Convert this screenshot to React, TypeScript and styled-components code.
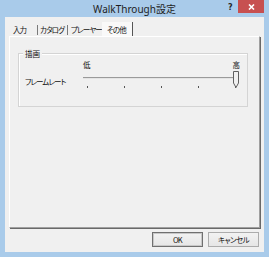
import React from "react";
import styled, { createGlobalStyle } from "styled-components";

const Global = createGlobalStyle`
  html, body { margin: 0; padding: 0; background: #a9cbea; }
  body { width: 269px; height: 257px; overflow: hidden; }
  * { box-sizing: border-box; }
`;

const jp = `"Noto Sans CJK JP", "Noto Sans", sans-serif`;

const Frame = styled.div`
  width: 269px;
  height: 257px;
  background: #a9cbea;
  display: flex;
  flex-direction: column;
  position: relative;
`;

const TitleBar = styled.div`
  height: 17px;
  display: flex;
  align-items: center;
  justify-content: center;
  position: relative;
`;

const Title = styled.div`
  font-family: "Noto Sans", "Noto Sans CJK JP", sans-serif;
  font-size: 10px;
  color: #1e1e1e;
  line-height: 1;
  margin-top: 1px;
`;

const HelpGlyph = styled.div`
  position: absolute;
  left: 228px;
  top: 3px;
  font-family: "DejaVu Sans", sans-serif;
  font-weight: bold;
  font-size: 8px;
  color: #2a2a2a;
`;

const CloseBtn = styled.div`
  position: absolute;
  left: 238px;
  top: 0;
  width: 26px;
  height: 13px;
  background: #c75050;
  display: flex;
  align-items: center;
  justify-content: center;
`;

const Client = styled.div`
  flex: 1;
  margin: 0 5px 5px 5px;
  background: #f0f0f0;
  display: flex;
  flex-direction: column;
  padding: 5px 4px 0 4px;
`;

const TabStrip = styled.div`
  height: 14px;
  display: flex;
  align-items: stretch;
`;

const Tab = styled.div<{ $w: number; $pad: number; $active?: boolean; $sep?: boolean }>`
  width: ${(p) => p.$w}px;
  font-family: ${jp};
  font-size: 7.5px;
  letter-spacing: -0.9px;
  font-feature-settings: "palt";
  white-space: nowrap;
  color: #111;
  display: flex;
  align-items: center;
  padding-top: 1px;
  padding-left: ${(p) => p.$pad}px;
  background: ${(p) => (p.$active ? "#f9f9f9" : "transparent")};
  position: relative;
  &::after {
    content: "";
    position: absolute;
    right: 0;
    top: ${(p) => (p.$active ? 0 : 3)}px;
    bottom: ${(p) => (p.$active ? 0 : 1)}px;
    width: 1px;
    background: ${(p) => (p.$active ? "#555" : p.$sep ? "#7a7a7a" : "transparent")};
  }
`;

const Panel = styled.div`
  height: 192px;
  border-top: 1px solid #fff;
  border-left: 1px solid #fff;
  border-right: 1px solid #a0a0a0;
  border-bottom: 1px solid #a0a0a0;
  box-shadow: 1px 1px 0 #696969;
  padding: 16px 11px 0 8px;
`;

const GroupBox = styled.div`
  position: relative;
  border: 1px solid #d4d4d4;
  box-shadow: inset 1px 1px 0 #fff;
  padding: 6px 7px 16px 6px;
  display: grid;
  grid-template-columns: 58px 157px;
  grid-template-rows: 10px 20px;
`;

const GroupLabel = styled.div`
  position: absolute;
  left: 4px;
  top: -6px;
  padding: 0 2px;
  background: #f0f0f0;
  font-family: ${jp};
  font-size: 7.5px;
  line-height: 11px;
  color: #111;
`;

const Text = styled.div`
  font-family: ${jp};
  font-size: 7.5px;
  letter-spacing: -0.9px;
  font-feature-settings: "palt";
  line-height: 10px;
  color: #111;
  white-space: nowrap;
`;

const RangeLabels = styled.div`
  display: flex;
  justify-content: space-between;
  padding: 0 1px 0 0;
`;

const RowLabel = styled(Text)`
  margin-top: 7px;
`;

const Slider = styled.div`
  position: relative;
`;

const Track = styled.div`
  position: absolute;
  left: 0;
  top: 7px;
  width: 156px;
  height: 2px;
  border-top: 1px solid #9a9a9a;
  border-bottom: 1px solid #e4e4e4;
  background: #c8c8c8;
`;

const Ticks = styled.div`
  position: absolute;
  left: 4px;
  top: 16px;
  width: 149px;
  display: flex;
  justify-content: space-between;
`;

const Tick = styled.div`
  width: 1px;
  height: 2px;
  background: #555;
`;

const Thumb = styled.svg`
  position: absolute;
  left: 150px;
  top: 1px;
`;

const ButtonRow = styled.div`
  display: flex;
  justify-content: flex-end;
  gap: 5px;
  padding: 4px 1px 0 0;
`;

const Button = styled.div<{ $default?: boolean }>`
  width: 51px;
  height: 15px;
  font-family: ${jp};
  font-size: 7.5px;
  letter-spacing: -0.6px;
  font-feature-settings: "palt";
  color: #111;
  display: flex;
  align-items: center;
  justify-content: center;
  background: linear-gradient(#f2f2f2, #e6e6e6);
  border: 1px solid ${(p) => (p.$default ? "#707070" : "#acacac")};
  ${(p) => (p.$default ? "box-shadow: inset 0 0 0 1px #c8c8c8;" : "")}
`;

export default function App() {
  return (
    <>
      <Global />
      <Frame>
        <TitleBar>
          <Title>WalkThrough設定</Title>
          <HelpGlyph>?</HelpGlyph>
          <CloseBtn>
            <svg width="7" height="6" viewBox="0 0 7 6">
              <path d="M1 0.5 L6 5.5 M6 0.5 L1 5.5" stroke="#fff" strokeWidth="1.6" />
            </svg>
          </CloseBtn>
        </TitleBar>
        <Client>
          <TabStrip>
            <Tab $w={29} $pad={4} $sep>入力</Tab>
            <Tab $w={30} $pad={2} $sep>カタログ</Tab>
            <Tab $w={34} $pad={3}>プレーヤー</Tab>
            <Tab $w={31} $pad={5} $active>その他</Tab>
          </TabStrip>
          <Panel>
            <GroupBox>
              <GroupLabel>描画</GroupLabel>
              <div />
              <RangeLabels>
                <Text>低</Text>
                <Text>高</Text>
              </RangeLabels>
              <RowLabel>フレームレート</RowLabel>
              <Slider>
                <Track />
                <Ticks>
                  <Tick />
                  <Tick />
                  <Tick />
                  <Tick />
                  <Tick />
                </Ticks>
                <Thumb width="6" height="17" viewBox="0 0 6 17">
                  <path d="M0.5 0.5 H5.5 V12 L3 16.5 L0.5 12 Z" fill="#f0f0f0" stroke="#606060" />
                </Thumb>
              </Slider>
            </GroupBox>
          </Panel>
          <ButtonRow>
            <Button $default>OK</Button>
            <Button>キャンセル</Button>
          </ButtonRow>
        </Client>
      </Frame>
    </>
  );
}
